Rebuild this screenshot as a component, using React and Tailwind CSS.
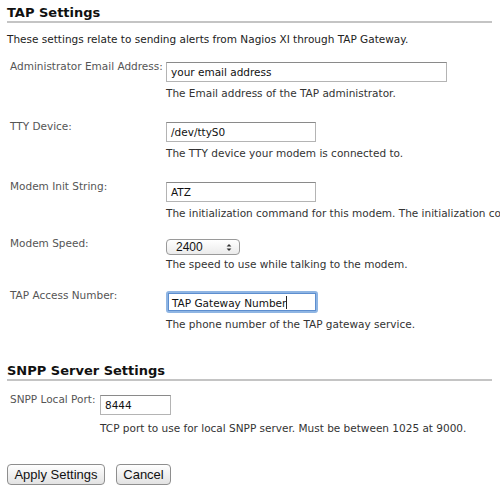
import React from "react";

const font = { fontFamily: '"DejaVu Sans", Verdana, sans-serif' };

function Label({ children, w = "w-[159px]" }) {
  return (
    <div className={"shrink-0 whitespace-nowrap pl-[3px] mt-[-3px] text-[10.5px] leading-[14px] text-[#555] " + w}>
      {children}
    </div>
  );
}

function Help({ children, mt = "mt-[4px]" }) {
  return (
    <div className={"whitespace-nowrap text-[10.5px] leading-[14px] text-[#333] " + mt}>{children}</div>
  );
}

function TextInput({ value, w }) {
  return (
    <div
      className={"h-[20px] border border-[#b4b4b4] border-t-[#8a8a8a] bg-white px-[4px] text-[10.5px] leading-[18px] text-[#111] whitespace-nowrap " + w}
    >
      {value}
    </div>
  );
}

export default function App() {
  return (
    <div className="w-[500px] h-[494px] overflow-hidden bg-white text-[#222]" style={font}>
      <div className="px-[7px] pt-[6px]">
        <h2 className="text-[13px] font-bold leading-[14px] text-[#111]">TAP Settings</h2>
        <div className="mt-[1px] h-[2px] w-[485px] bg-[#c4c4c4]" />
        <p className="mt-[9px] text-[10.5px] leading-[14px] text-[#222]">
          These settings relate to sending alerts from Nagios XI through TAP Gateway.
        </p>

        <div className="mt-[16px] flex">
          <Label>Administrator Email Address:</Label>
          <div className="flex flex-col">
            <TextInput value="your email address" w="w-[281px]" />
            <Help>The Email address of the TAP administrator.</Help>
          </div>
        </div>

        <div className="mt-[22px] flex">
          <Label>TTY Device:</Label>
          <div className="flex flex-col">
            <TextInput value="/dev/ttyS0" w="w-[150px]" />
            <Help>The TTY device your modem is connected to.</Help>
          </div>
        </div>

        <div className="mt-[22px] flex">
          <Label>Modem Init String:</Label>
          <div className="flex flex-col">
            <TextInput value="ATZ" w="w-[150px]" />
            <Help>The initialization command for this modem. The initialization command for this modem.</Help>
          </div>
        </div>

        <div className="mt-[19px] flex">
          <Label>Modem Speed:</Label>
          <div className="flex flex-col">
            <div
              className="flex h-[16px] w-[74px] items-center justify-between rounded-[4px] border border-[#9a9a9a] bg-gradient-to-b from-white to-[#ebebeb] pl-[9px] pr-[7px] text-[12px] leading-[14px] text-[#111]"
              style={{ fontFamily: '"Liberation Sans", Arial, sans-serif' }}
            >
              <span>2400</span>
              <svg width="6" height="9" viewBox="0 0 6 9">
                <path d="M0.6 3.6 L3 0.9 L5.4 3.6 Z" fill="#333" />
                <path d="M0.6 5.4 L3 8.1 L5.4 5.4 Z" fill="#333" />
              </svg>
            </div>
            <Help mt="mt-[2px]">The speed to use while talking to the modem.</Help>
          </div>
        </div>

        <div className="mt-[20px] flex">
          <Label>TAP Access Number:</Label>
          <div className="flex flex-col">
            <div className="h-[22px] w-[152px] rounded-[3px] border-[2px] border-[#8fb5e3] bg-white">
              <div className="h-full border border-[#5d8ecf] px-[3px] text-[10.5px] leading-[16px] text-[#111] whitespace-nowrap">
                TAP Gateway Number
                <span className="inline-block h-[13px] w-px translate-y-[2px] bg-[#222]" />
              </div>
            </div>
            <Help mt="mt-[4px]">The phone number of the TAP gateway service.</Help>
          </div>
        </div>

        <h2 className="mt-[33px] text-[13px] font-bold leading-[14px] text-[#111]">SNPP Server Settings</h2>
        <div className="mt-[1px] h-[2px] w-[485px] bg-[#c4c4c4]" />

        <div className="mt-[14px] flex">
          <Label w="w-[93px]">SNPP Local Port:</Label>
          <div className="flex flex-col">
            <TextInput value="8444" w="w-[71px]" />
            <Help mt="mt-[6px]">TCP port to use for local SNPP server. Must be between 1025 at 9000.</Help>
          </div>
        </div>

        <div className="mt-[29px] flex gap-[11px]" style={{ fontFamily: '"Liberation Sans", Arial, sans-serif' }}>
          <button className="h-[21px] w-[98px] rounded-[4px] border border-[#8e8e8e] bg-gradient-to-b from-white to-[#e2e2e2] text-[13px] leading-[19px] text-[#111]">
            Apply Settings
          </button>
          <button className="h-[21px] w-[55px] rounded-[4px] border border-[#8e8e8e] bg-gradient-to-b from-white to-[#e2e2e2] text-[13px] leading-[19px] text-[#111]">
            Cancel
          </button>
        </div>
      </div>
    </div>
  );
}
